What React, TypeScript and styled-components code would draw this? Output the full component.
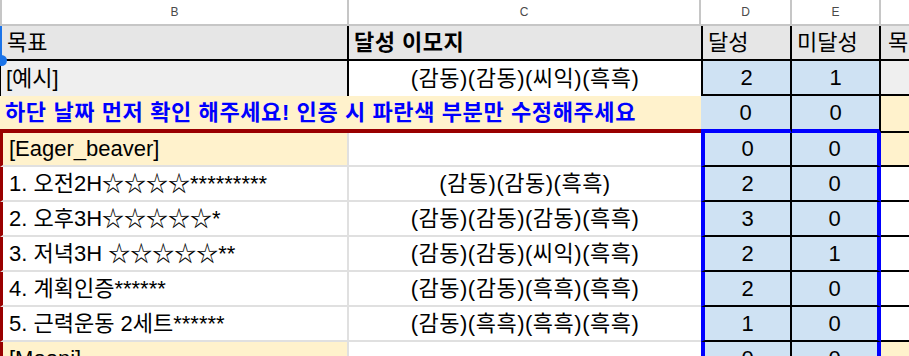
import React from 'react'
import styled, { createGlobalStyle } from 'styled-components'

const RED = '#990000'
const BLUE = '#0000ff'
const BLACK = '#000'
const GRID = '#e0e0e0'
const YELLOW = '#fff2cc'
const SKY = '#cfe2f3'
const HEAD_GRAY = '#e6e6e6'
const LIGHT_GRAY = '#efefef'

const GlobalStyle = createGlobalStyle`
  body {
    margin: 0;
    background: #fff;
    overflow: hidden;
  }
`

const Sheet = styled.div`
  position: relative;
  display: grid;
  grid-template-columns: 349px 352px 91px 89px 120px;
  grid-template-rows: 26px 35px 35px 37px 34px repeat(6, 35px);
  width: 1001px;
  font-family: 'Liberation Sans', Arial, 'Noto Sans CJK KR', sans-serif;
  font-size: 22px;
  color: #000;
`

const ColHead = styled.div<{ $first?: boolean }>`
  box-sizing: border-box;
  display: flex;
  align-items: center;
  justify-content: center;
  background: #fff;
  border-left: ${p => (p.$first ? '2px solid #c6c6c6' : 'none')};
  border-right: 2px solid #c6c6c6;
  border-bottom: 2px solid #c6c6c6;
  font-size: 12px;
  color: #4a4a4a;
`

type CellProps = {
  $bg?: string
  $left?: string
  $right?: string
  $bottom?: string
  $center?: boolean
  $bold?: boolean
  $ink?: string
  $span?: number
  $track?: number
}

const Cell = styled.div<CellProps>`
  box-sizing: border-box;
  display: flex;
  align-items: center;
  justify-content: ${p => (p.$center ? 'center' : 'flex-start')};
  padding: 0 5px;
  grid-column: span ${p => p.$span ?? 1};
  background: ${p => p.$bg ?? '#fff'};
  border-left: ${p => p.$left ?? 'none'};
  border-right: ${p => p.$right ?? 'none'};
  border-bottom: ${p => p.$bottom ?? 'none'};
  font-weight: ${p => (p.$bold ? 700 : 400)};
  color: ${p => p.$ink ?? '#000'};
  letter-spacing: ${p => p.$track ?? 0}px;
  line-height: 24px;
  white-space: nowrap;
  overflow: hidden;
`

const GoalCell = styled(Cell)`
  padding-left: 6px;
`

const SideCell = styled(Cell)`
  padding-left: 7px;
`

const SelectionHandle = styled.span`
  position: absolute;
  left: -4px;
  top: 55px;
  width: 11px;
  height: 11px;
  border-radius: 50%;
  background: #1a73e8;
`

const line = (w: number, c: string) => `${w}px solid ${c}`

type Goal = { label: string; emoji: string; done: number; missed: number; group?: boolean }

const goals: Goal[] = [
  { label: '[Eager_beaver]', emoji: '', done: 0, missed: 0, group: true },
  { label: '1. 오전2H☆☆☆☆*********', emoji: '(감동)(감동)(흑흑)', done: 2, missed: 0 },
  { label: '2. 오후3H☆☆☆☆☆*', emoji: '(감동)(감동)(감동)(흑흑)', done: 3, missed: 0 },
  { label: '3. 저녁3H ☆☆☆☆☆**', emoji: '(감동)(감동)(씨익)(흑흑)', done: 2, missed: 1 },
  { label: '4. 계획인증******', emoji: '(감동)(감동)(흑흑)(흑흑)', done: 2, missed: 0 },
  { label: '5. 근력운동 2세트******', emoji: '(감동)(흑흑)(흑흑)(흑흑)', done: 1, missed: 0 },
  { label: '[Mooni]', emoji: '', done: 0, missed: 0, group: true },
]

export default function App() {
  return (
    <>
      <GlobalStyle />
      <Sheet>
        <ColHead $first>B</ColHead>
        <ColHead>C</ColHead>
        <ColHead>D</ColHead>
        <ColHead>E</ColHead>
        <ColHead />

        {/* header row */}
        <Cell $bg={HEAD_GRAY} $left={line(2, '#1a73e8')} $right={line(2, BLACK)} $bottom={line(2, BLACK)}>
          목표
        </Cell>
        <Cell $bg={HEAD_GRAY} $bottom={line(2, BLACK)} $bold $track={0.5}>
          달성 이모지
        </Cell>
        <Cell $bg={HEAD_GRAY} $left={line(2, BLACK)} $right={line(2, BLACK)} $bottom={line(2, BLACK)}>
          달성
        </Cell>
        <Cell $bg={HEAD_GRAY} $right={line(2, BLACK)} $bottom={line(2, BLACK)}>
          미달성
        </Cell>
        <SideCell $bg={HEAD_GRAY} $bottom={line(2, BLACK)}>
          목표
        </SideCell>

        {/* example row */}
        <Cell $bg={LIGHT_GRAY} $left={line(1, BLACK)} $right={line(2, BLACK)}>
          [예시]
        </Cell>
        <Cell $center $track={0.5}>
          (감동)(감동)(씨익)(흑흑)
        </Cell>
        <Cell $bg={SKY} $center $left={line(2, BLACK)} $right={line(2, BLACK)} $bottom={line(2, BLACK)}>
          2
        </Cell>
        <Cell $bg={SKY} $center $right={line(2, BLACK)} $bottom={line(2, BLACK)}>
          1
        </Cell>
        <SideCell $bg={LIGHT_GRAY} $bottom={line(2, BLACK)} />

        {/* notice row */}
        <Cell $span={2} $bg={YELLOW} $bold $ink={BLUE} $track={0.6} $bottom={line(4, RED)}>
          하단 날짜 먼저 확인 해주세요! 인증 시 파란색 부분만 수정해주세요
        </Cell>
        <Cell $bg={SKY} $center $right={line(2, BLACK)} $bottom={line(4, BLUE)}>
          0
        </Cell>
        <Cell $bg={SKY} $center $right={line(2, BLACK)} $bottom={line(4, BLUE)}>
          0
        </Cell>
        <SideCell $bg={YELLOW} $bottom={line(2, BLACK)} />

        {goals.map(g => (
          <React.Fragment key={g.label}>
            <GoalCell
              $bg={g.group ? YELLOW : '#fff'}
              $left={line(3, RED)}
              $right={line(2, GRID)}
              $bottom={line(2, GRID)}
            >
              {g.label}
            </GoalCell>
            <Cell $center $track={0.5} $bottom={line(2, GRID)}>
              {g.emoji}
            </Cell>
            <Cell $bg={SKY} $center $left={line(4, BLUE)} $right={line(2, BLACK)} $bottom={line(2, BLACK)}>
              {g.done}
            </Cell>
            <Cell $bg={SKY} $center $right={line(4, BLUE)} $bottom={line(2, BLACK)}>
              {g.missed}
            </Cell>
            <SideCell $bg={g.group ? YELLOW : '#fff'} $bottom={line(2, BLACK)} />
          </React.Fragment>
        ))}

        <SelectionHandle />
      </Sheet>
    </>
  )
}
